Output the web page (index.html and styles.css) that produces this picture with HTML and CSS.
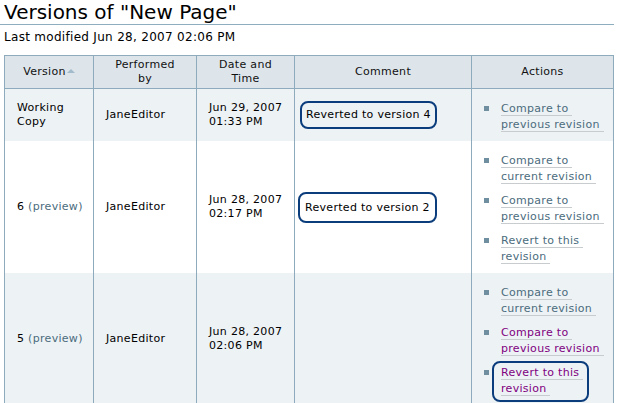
FILE: index.html
```html
<!DOCTYPE html>
<html>
<head>
<meta charset="utf-8">
<title>Versions of "New Page"</title>
<link rel="stylesheet" href="styles.css">
</head>
<body>
<div class="page">
  <h1 class="title">Versions of "New Page"</h1>
  <p class="modified">Last modified Jun 28, 2007 02:06 PM</p>
  <table class="versions">
    <colgroup>
      <col class="c-version">
      <col class="c-by">
      <col class="c-date">
      <col class="c-comment">
      <col class="c-actions">
    </colgroup>
    <thead>
      <tr>
        <th>Version<span class="sort"></span></th>
        <th>Performed<br>by</th>
        <th>Date and<br>Time</th>
        <th>Comment</th>
        <th>Actions</th>
      </tr>
    </thead>
    <tbody>
      <tr class="odd">
        <td>Working<br>Copy</td>
        <td>JaneEditor</td>
        <td>Jun 29, 2007<br>01:33 PM</td>
        <td class="comment"><span class="note">Reverted to version 4</span></td>
        <td class="actions">
          <ul>
            <li><a href="#">Compare to&nbsp;<br>previous revision&nbsp;</a></li>
          </ul>
        </td>
      </tr>
      <tr class="even">
        <td>6 <a class="preview" href="#">(preview)</a></td>
        <td>JaneEditor</td>
        <td>Jun 28, 2007<br>02:17 PM</td>
        <td class="comment"><span class="note note-2">Reverted to version 2</span></td>
        <td class="actions">
          <ul>
            <li><a href="#">Compare to&nbsp;<br>current revision&nbsp;</a></li>
            <li><a href="#">Compare to&nbsp;<br>previous revision&nbsp;</a></li>
            <li><a href="#">Revert to this&nbsp;<br>revision&nbsp;</a></li>
          </ul>
        </td>
      </tr>
      <tr class="odd">
        <td>5 <a class="preview" href="#">(preview)</a></td>
        <td>JaneEditor</td>
        <td>Jun 28, 2007<br>02:06 PM</td>
        <td class="comment"></td>
        <td class="actions">
          <ul>
            <li><a href="#">Compare to&nbsp;<br>current revision&nbsp;</a></li>
            <li><a class="visited" href="#">Compare to&nbsp;<br>previous revision&nbsp;</a></li>
            <li><span class="circled"><a class="visited" href="#">Revert to this&nbsp;<br>revision&nbsp;</a></span></li>
          </ul>
        </td>
      </tr>
    </tbody>
  </table>
</div>
</body>
</html>
```

FILE: styles.css
```css
html, body {
  margin: 0;
  padding: 0;
  background: #ffffff;
}

body {
  font-family: "DejaVu Sans", Verdana, sans-serif;
  font-size: 11px;
  letter-spacing: 0.3px;
  color: #000000;
}

.page {
  padding: 0 6px 0 0;
}

.title {
  margin: 0;
  padding: 0 0 0 4px;
  font-size: 20px;
  font-weight: normal;
  letter-spacing: 0;
  line-height: 24px;
  color: #000000;
  border-bottom: 1px solid #8eadbe;
}

.modified {
  margin: 5px 0 11px 4px;
  font-size: 12px;
  letter-spacing: 0.3px;
  line-height: 14px;
}

.versions {
  margin-left: 4px;
  width: 610px;
  border-collapse: collapse;
  table-layout: fixed;
  border: 1px solid #8eabbd;
}

.c-version { width: 89px; }
.c-by { width: 103px; }
.c-date { width: 98px; }
.c-comment { width: 177px; }
.c-actions { width: 142px; }

.versions th,
.versions td {
  border: 1px solid #8eabbd;
  border-top: none;
  border-bottom: none;
  line-height: 14px;
}

.versions th {
  background: #dde5eb;
  font-weight: normal;
  text-align: center;
  height: 32px;
  padding: 0 4px;
  color: #111111;
  border-bottom: 1px solid #8eabbd;
}

.sort {
  display: inline-block;
  width: 0;
  height: 0;
  margin-left: 1px;
  border-left: 4px solid transparent;
  border-right: 4px solid transparent;
  border-bottom: 4px solid #a2bccb;
  vertical-align: 2px;
}

.versions td {
  padding: 0 2px 0 12px;
  vertical-align: middle;
}

.versions tr.odd td {
  background: #edf2f5;
}

.versions tr.even td {
  background: #ffffff;
}

.versions td.comment {
  padding-left: 5px;
}

.note {
  display: inline-block;
  padding: 5px 4px 5px 4px;
  border: 2px solid #0b3d7c;
  border-radius: 8px;
  line-height: 14px;
}

.note-2 {
  padding: 7px 5px 6px 5px;
  margin-left: -2px;
}

a {
  color: #4b6c7d;
  text-decoration: none;
}

a.preview {
  color: #4b6c7d;
}

a.visited {
  color: #800080;
}

.actions ul {
  margin: 0;
  padding: 12px 0 0 0;
  list-style: none;
}

.actions li {
  position: relative;
  margin: 0 0 8px 0;
  padding-left: 17px;
  line-height: 16px;
}

.actions li::before {
  content: "";
  position: absolute;
  left: 0;
  top: 5px;
  width: 5px;
  height: 5px;
  background: #6f8fa0;
}

.actions a {
  border-bottom: 1px solid #c9cccf;
}

.versions td.actions {
  padding: 0 0 0 12px;
  vertical-align: top;
}

.circled {
  position: relative;
}

.circled::after {
  content: "";
  position: absolute;
  left: -9px;
  top: -5px;
  width: 93px;
  height: 37px;
  border: 2px solid #0b3d7c;
  border-radius: 8px;
  pointer-events: none;
}
```
